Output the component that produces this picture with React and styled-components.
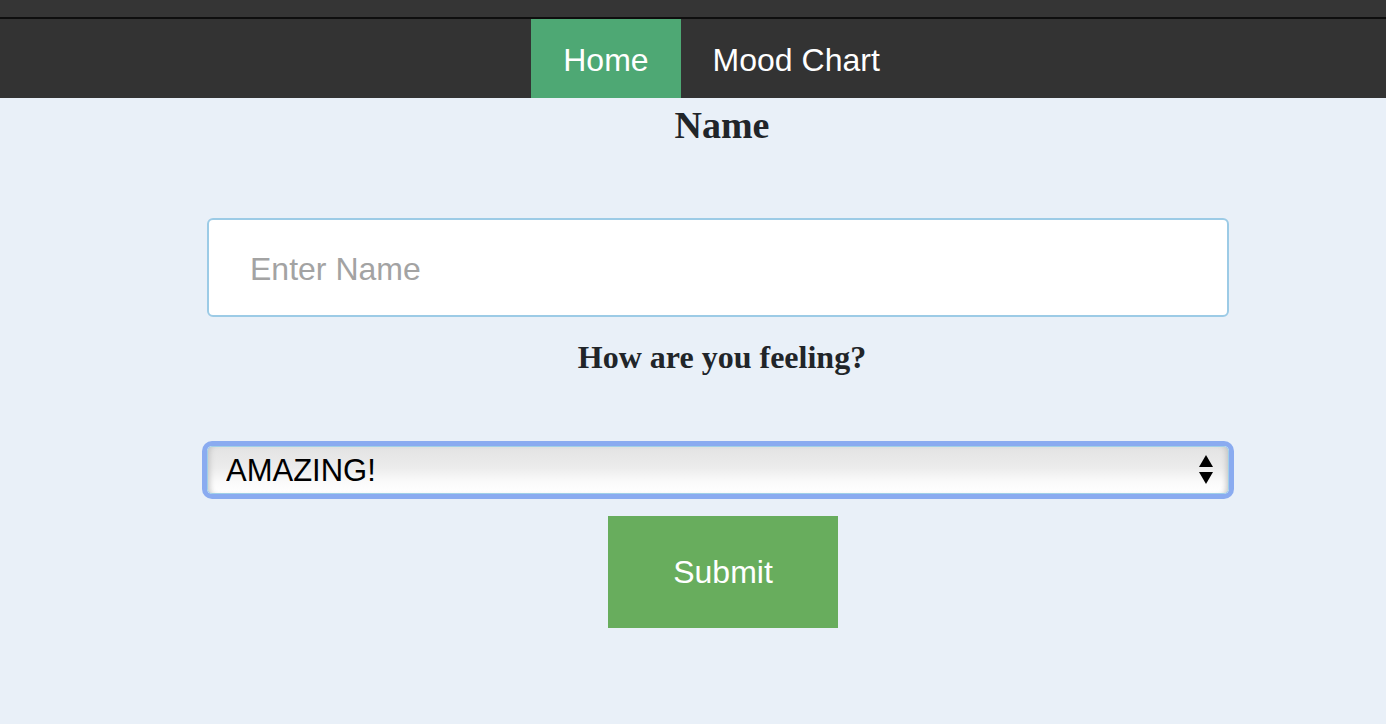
import styled, { createGlobalStyle } from "styled-components";

const GlobalStyle = createGlobalStyle`
  body {
    margin: 0;
    background-color: #e9f0f8;
    font-family: "Liberation Sans", Arial, sans-serif;
  }
`;

const TopStrip = styled.div`
  height: 17px;
  background-color: #353535;
  border-bottom: 2px solid #0e0e0e;
`;

const NavBar = styled.nav`
  display: flex;
  justify-content: center;
  padding-left: 57px;
  height: 79px;
  background-color: #333;
`;

const NavLink = styled.a`
  display: flex;
  align-items: center;
  padding: 3px 32px 0;
  font-size: 32px;
  color: #fff;
  text-decoration: none;
  background-color: ${(p) => (p.active ? "#4ea874" : "transparent")};
`;

const Form = styled.form`
  display: flex;
  flex-direction: column;
  width: 1022px;
  margin-left: 207px;
`;

const Label = styled.label`
  display: block;
  padding-left: 8px;
  text-align: center;
  font-family: "Liberation Serif", "Times New Roman", serif;
  font-weight: bold;
  font-size: ${(p) => p.size}px;
  line-height: normal;
  color: #212529;
  margin-top: ${(p) => p.top}px;
`;

const NameInput = styled.input`
  box-sizing: border-box;
  width: 100%;
  height: 99px;
  margin-top: 71px;
  padding: 4px 0 0 41px;
  border: 2px solid #9ccbe6;
  border-radius: 6px;
  background: #fff;
  font-family: "Liberation Sans", Arial, sans-serif;
  font-size: 32px;
  outline: none;

  &::placeholder {
    color: #a3a3a3;
  }
`;

const SelectWrap = styled.div`
  position: relative;
  margin-top: 70px;
`;

const MoodSelect = styled.select`
  appearance: none;
  box-sizing: border-box;
  width: 100%;
  height: 48px;
  padding: 0 0 0 18px;
  border: 1px solid #9fd0e8;
  border-radius: 5px;
  background: linear-gradient(#e3e3e3, #ececec 45%, #fafafa 75%, #fff);
  box-shadow: 0 0 0 5px #8aabf0, inset 6px 0 6px -5px #bbb,
    inset -6px 0 6px -5px #bbb;
  font-family: "Liberation Sans", Arial, sans-serif;
  font-size: 31px;
  color: #000;
  outline: none;
`;

const Arrows = styled.svg`
  position: absolute;
  right: 16px;
  top: 9px;
  pointer-events: none;
`;

const SubmitButton = styled.button`
  align-self: center;
  margin: 22px 0 0 10px;
  width: 230px;
  height: 112px;
  border: none;
  background-color: #68ad5d;
  color: #fff;
  font-family: "Liberation Sans", Arial, sans-serif;
  font-size: 32px;
`;

const App = () => {
  return (
    <>
      <GlobalStyle />
      <TopStrip />
      <NavBar>
        <NavLink href="#" active>
          Home
        </NavLink>
        <NavLink href="#">Mood Chart</NavLink>
      </NavBar>
      <Form onSubmit={(e) => e.preventDefault()}>
        <Label size={38} top={5} htmlFor="name">
          Name
        </Label>
        <NameInput id="name" placeholder="Enter Name" />
        <Label size={32} top={22} htmlFor="mood">
          How are you feeling?
        </Label>
        <SelectWrap>
          <MoodSelect id="mood" defaultValue="amazing">
            <option value="amazing">AMAZING!</option>
            <option value="good">Good</option>
            <option value="okay">Okay</option>
            <option value="bad">Bad</option>
          </MoodSelect>
          <Arrows width="14" height="30" viewBox="0 0 14 30">
            <path d="M7 0 L14 12 L0 12 Z" fill="#000" />
            <path d="M0 17 L14 17 L7 29 Z" fill="#000" />
          </Arrows>
        </SelectWrap>
        <SubmitButton type="submit">Submit</SubmitButton>
      </Form>
    </>
  );
};

export default App;
